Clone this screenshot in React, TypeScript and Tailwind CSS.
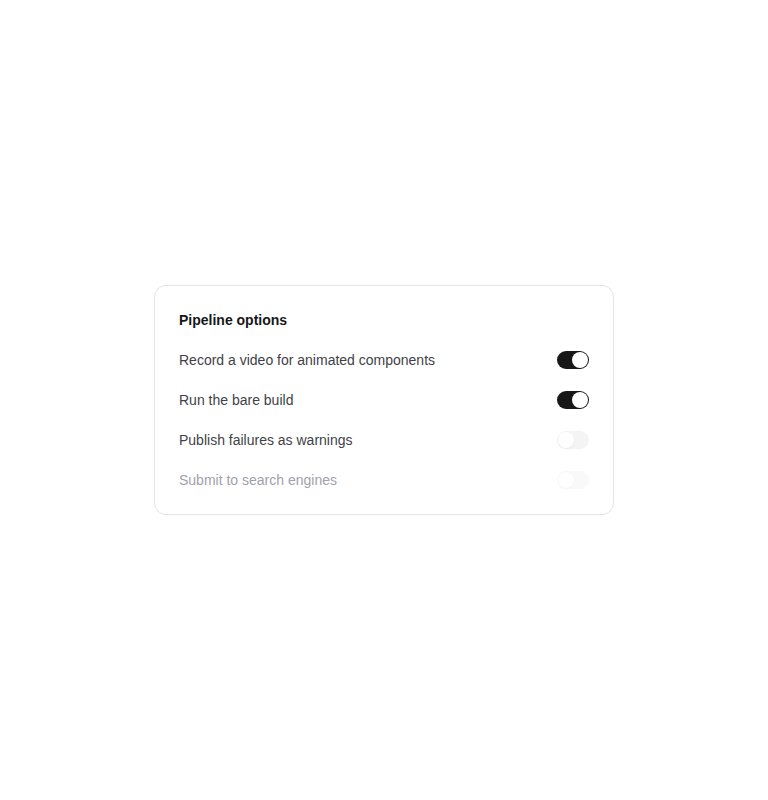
import { useState } from "react";

type Option = {
  id: string;
  label: string;
  checked: boolean;
  disabled?: boolean;
};

const initialOptions: Option[] = [
  { id: "video", label: "Record a video for animated components", checked: true },
  { id: "bare", label: "Run the bare build", checked: true },
  { id: "warnings", label: "Publish failures as warnings", checked: false },
  { id: "search", label: "Submit to search engines", checked: false, disabled: true },
];

function Toggle({
  checked,
  disabled,
  onChange,
}: {
  checked: boolean;
  disabled?: boolean;
  onChange: () => void;
}) {
  return (
    <button
      type="button"
      role="switch"
      aria-checked={checked}
      disabled={disabled}
      onClick={onChange}
      className={`flex h-[18px] w-8 shrink-0 items-center rounded-full p-px ${
        checked ? "bg-[#171717] justify-end" : "bg-[#f4f4f5] justify-start"
      } ${disabled ? "opacity-50" : ""}`}
    >
      <span className="h-4 w-4 rounded-full bg-white shadow-[0_1px_2px_rgba(0,0,0,0.05)]" />
    </button>
  );
}

export default function App() {
  const [options, setOptions] = useState(initialOptions);

  const toggle = (id: string) =>
    setOptions((prev) =>
      prev.map((o) => (o.id === id ? { ...o, checked: !o.checked } : o))
    );

  return (
    <div
      className="flex min-h-[800px] items-center justify-center bg-white"
      style={{ fontFamily: '"Liberation Sans", Arial, sans-serif' }}
    >
      <div className="w-[460px] rounded-xl border border-[#e4e4e7] bg-white p-6">
        <h2 className="text-sm leading-5 font-bold text-[#171717]">Pipeline options</h2>
        <div className="mt-5 flex flex-col gap-5">
          {options.map((o) => (
            <div key={o.id} className="flex h-5 items-center justify-between">
              <span
                className={`text-sm leading-5 ${
                  o.disabled ? "text-[#a1a1aa]" : "text-[#3f3f46]"
                }`}
              >
                {o.label}
              </span>
              <Toggle
                checked={o.checked}
                disabled={o.disabled}
                onChange={() => toggle(o.id)}
              />
            </div>
          ))}
        </div>
      </div>
    </div>
  );
}
